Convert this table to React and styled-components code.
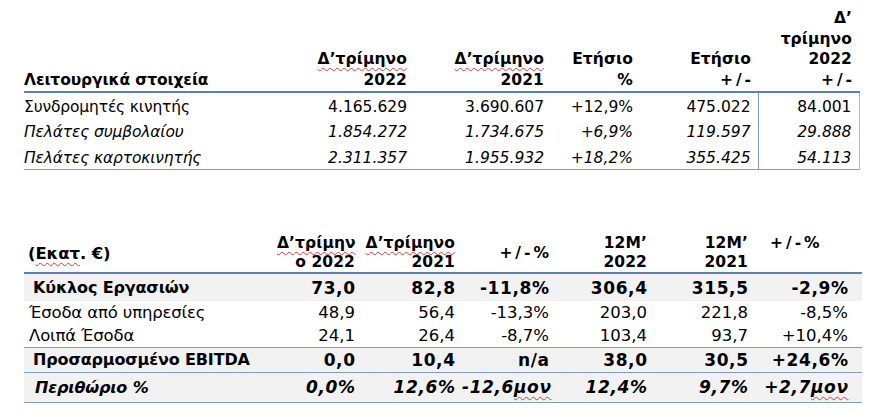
import React from 'react';
import styled, { createGlobalStyle } from 'styled-components';

const GlobalStyle = createGlobalStyle`
  html, body {
    margin: 0;
    padding: 0;
    background: #fff;
  }
  body {
    font-family: "DejaVu Sans", "Liberation Sans", sans-serif;
    color: #000;
  }
`;

const Page = styled.div`
  width: 881px;
  height: 417px;
  padding: 8px 0 0 24px;
  box-sizing: border-box;
  display: flex;
  flex-direction: column;
`;

const Table = styled.table`
  border-collapse: collapse;
  table-layout: fixed;
  width: ${p => p.$width}px;
  margin-top: ${p => p.$top || 0}px;
`;

const HeadCell = styled.th`
  font-size: 15.5px;
  font-weight: bold;
  line-height: ${p => p.$lh || 20.7}px;
  text-align: ${p => p.$align || 'right'};
  vertical-align: ${p => p.$valign || 'bottom'};
  padding: 0 7px 0 ${p => p.$padLeft || 0}px;
  border-bottom: 2px solid #5b80b2;
  letter-spacing: 0.1px;
  white-space: nowrap;
`;

const LabelHead = styled(HeadCell)`
  text-align: left;
  font-size: ${p => p.$size || 15.5}px;
  letter-spacing: -0.1px;
`;

const Wide = styled.span`
  letter-spacing: ${p => p.$ls || 3}px;
  margin-right: -${p => p.$ls || 3}px;
`;

const Squiggle = styled.span`
  text-decoration: underline wavy #d23c3c;
  text-decoration-thickness: 1px;
  text-underline-offset: 3px;
`;

const Row = styled.tr`
  height: ${p => p.$h}px;
  background: ${p => (p.$shade ? '#f2f2f2' : 'transparent')};
  font-style: ${p => (p.$italic ? 'italic' : 'normal')};
  font-weight: ${p => (p.$bold ? 'bold' : 'normal')};
  border-bottom: ${p => (p.$line ? '1px solid #7f9cc4' : 'none')};
`;

const Label = styled.td`
  font-size: ${p => p.$size || 15.5}px;
  text-align: left;
  padding: ${p => p.$padTop || 0}px 0 0 ${p => p.$padLeft || 0}px;
  white-space: nowrap;
  letter-spacing: -0.15px;
`;

const Num = styled.td`
  font-size: ${p => p.$size || 15.5}px;
  text-align: right;
  padding: ${p => p.$padTop || 0}px ${p => p.$padRight || 7}px 0 0;
  white-space: nowrap;
  letter-spacing: ${p => p.$ls || 0}px;
  border-left: ${p => (p.$box ? '1px solid #7f9cc4' : 'none')};
  border-right: ${p => (p.$box ? '1px solid #a9bcd8' : 'none')};
`;

const NumText = styled.span`
  margin-right: -${p => p.$ls || 0}px;
`;

const opsRows = [
  { label: 'Συνδρομητές κινητής', vals: ['4.165.629', '3.690.607', '+12,9%', '475.022', '84.001'], h: 27 },
  { label: 'Πελάτες συμβολαίου', vals: ['1.854.272', '1.734.675', '+6,9%', '119.597', '29.888'], italic: true, h: 25 },
  { label: 'Πελάτες καρτοκινητής', vals: ['2.311.357', '1.955.932', '+18,2%', '355.425', '54.113'], italic: true, h: 26, line: true },
];

const finRows = [
  { label: 'Κύκλος Εργασιών', vals: ['73,0', '82,8', '-11,8%', '306,4', '315,5', '-2,9%'], bold: true, shade: true, h: 28, pad: 9 },
  { label: 'Έσοδα από υπηρεσίες', vals: ['48,9', '56,4', '-13,3%', '203,0', '221,8', '-8,5%'], h: 23, pad: 5 },
  { label: 'Λοιπά Έσοδα', vals: ['24,1', '26,4', '-8,7%', '103,4', '93,7', '+10,4%'], h: 23, pad: 5, line: true },
  { label: 'Προσαρμοσμένο EBITDA', vals: ['0,0', '10,4', 'n/a', '38,0', '30,5', '+24,6%'], bold: true, shade: true, h: 25, pad: 9, line: true },
  { label: 'Περιθώριο %', vals: ['0,0%', '12,6%', ['-12,6', 'μον'], '12,4%', '9,7%', ['+2,7', 'μον']], bold: true, italic: true, shade: true, h: 30, pad: 11, line: true },
];

const renderVal = v =>
  Array.isArray(v) ? (
    <>
      {v[0]}
      <Squiggle>{v[1]}</Squiggle>
    </>
  ) : (
    v
  );

export default function App() {
  return (
    <>
      <GlobalStyle />
      <Page>
        <Table $width={835}>
          <colgroup>
            <col style={{ width: 270 }} />
            <col style={{ width: 120 }} />
            <col style={{ width: 137 }} />
            <col style={{ width: 89 }} />
            <col style={{ width: 118 }} />
            <col style={{ width: 101 }} />
          </colgroup>
          <thead>
            <tr>
              <LabelHead>Λειτουργικά στοιχεία</LabelHead>
              <HeadCell>
                <Squiggle>Δ’τρίμηνο</Squiggle>
                <br />2022
              </HeadCell>
              <HeadCell>
                <Squiggle>Δ’τρίμηνο</Squiggle>
                <br />2021
              </HeadCell>
              <HeadCell>
                Ετήσιο
                <br />%
              </HeadCell>
              <HeadCell>
                Ετήσιο
                <br />
                <Wide>+/-</Wide>
              </HeadCell>
              <HeadCell>
                Δ’
                <br />τρίμηνο
                <br />2022
                <br />
                <Wide>+/-</Wide>
              </HeadCell>
            </tr>
          </thead>
          <tbody>
            {opsRows.map(r => (
              <Row key={r.label} $h={r.h} $italic={r.italic} $line={r.line}>
                <Label $padTop={2}>{r.label}</Label>
                {r.vals.map((v, i) => (
                  <Num key={i} $box={i === 4} $padTop={2}>
                    {v}
                  </Num>
                ))}
              </Row>
            ))}
          </tbody>
        </Table>

        <Table $width={838} $top={64}>
          <colgroup>
            <col style={{ width: 253 }} />
            <col style={{ width: 85 }} />
            <col style={{ width: 100 }} />
            <col style={{ width: 94 }} />
            <col style={{ width: 98 }} />
            <col style={{ width: 101 }} />
            <col style={{ width: 107 }} />
          </colgroup>
          <thead>
            <tr>
              <LabelHead $size={16.5} $valign="middle" $padLeft={4} $lh={19}>
                (<Squiggle>Εκατ</Squiggle>. €)
              </LabelHead>
              <HeadCell $lh={19}>
                <Squiggle>Δ’τρίμην</Squiggle>
                <br />ο 2022
              </HeadCell>
              <HeadCell $lh={19}>
                <Squiggle>Δ’τρίμηνο</Squiggle>
                <br />2021
              </HeadCell>
              <HeadCell $lh={19} $valign="middle">
                <Wide $ls={3}>+/-%</Wide>
              </HeadCell>
              <HeadCell $lh={19}>
                12M’
                <br />2022
              </HeadCell>
              <HeadCell $lh={19}>
                12M’
                <br />2021
              </HeadCell>
              <HeadCell $lh={19} $align="left" $valign="top" $padLeft={15}>
                <Wide $ls={3}>+/-%</Wide>
              </HeadCell>
            </tr>
          </thead>
          <tbody>
            {finRows.map(r => (
              <Row key={r.label} $h={r.h} $italic={r.italic} $bold={r.bold} $shade={r.shade} $line={r.line}>
                <Label $padLeft={r.pad} $size={r.bold ? 16 : 16.5}>
                  {r.label}
                </Label>
                {r.vals.map((v, i) => (
                  <Num
                    key={i}
                    $size={r.bold ? 17 : 16.5}
                    $ls={r.bold ? 0.6 : 0}
                    $padRight={i === 5 ? 14 : 7}
                  >
                    <NumText $ls={r.bold ? 0.6 : 0}>{renderVal(v)}</NumText>
                  </Num>
                ))}
              </Row>
            ))}
          </tbody>
        </Table>
      </Page>
    </>
  );
}
